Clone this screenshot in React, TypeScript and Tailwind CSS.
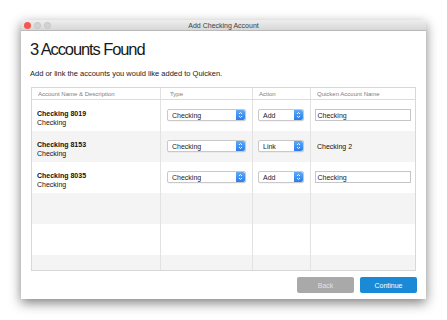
import React from "react";

const font = { fontFamily: '"Liberation Sans", Arial, sans-serif' };

function Stepper() {
  return (
    <div className="w-[9px] h-full bg-gradient-to-b from-[#5eaaf9] to-[#2a7ce9] rounded-r-[2px] flex items-center justify-center">
      <svg width="5" height="8" viewBox="0 0 5 8" fill="none">
        <path d="M1 3 L2.5 1.5 L4 3" stroke="white" strokeWidth="0.9" />
        <path d="M1 5 L2.5 6.5 L4 5" stroke="white" strokeWidth="0.9" />
      </svg>
    </div>
  );
}

function Select({ value, width }: { value: string; width: string }) {
  return (
    <div className={`${width} h-[12px] border border-[#c9c9c9] rounded-[2px] bg-white flex items-stretch shadow-[0_0.5px_0.5px_rgba(0,0,0,0.08)]`}>
      <div className="flex-1 pl-[4px] flex items-center text-[7px] text-[#222] leading-none">{value}</div>
      <Stepper />
    </div>
  );
}

function TextInput({ value }: { value: string }) {
  return (
    <div className="w-[96px] h-[12px] border border-[#c6c6c6] bg-white flex items-center pl-[1.5px] text-[7px] text-[#222] leading-none">
      {value}
    </div>
  );
}

type Row = { name: string; desc: string; action: string; link?: string };

const rows: Row[] = [
  { name: "Checking 8019", desc: "Checking", action: "Add" },
  { name: "Checking 8153", desc: "Checking", action: "Link", link: "Checking 2" },
  { name: "Checking 8035", desc: "Checking", action: "Add" },
];

export default function App() {
  return (
    <div className="w-[447px] h-[320px] bg-white pt-[20px] pl-[21px]" style={font}>
      <div className="w-[405px] h-[279px] bg-white flex flex-col shadow-[0_4px_12px_rgba(0,0,0,0.5)] rounded-t-[3px]">
        {/* Title bar */}
        <div className="h-[11px] relative flex items-center pl-[3px] bg-gradient-to-b from-[#eeeeee] to-[#d7d7d7] border-b border-[#b9b9b9] rounded-t-[3px]">
          <div className="flex gap-[3px]">
            <div className="w-[7px] h-[7px] rounded-full bg-[#f4574f]" />
            <div className="w-[7px] h-[7px] rounded-full bg-[#d3d3d3] border border-[#c4c4c4]" />
            <div className="w-[7px] h-[7px] rounded-full bg-[#d3d3d3] border border-[#c4c4c4]" />
          </div>
          <div className="absolute inset-0 flex items-center justify-center text-[7px] text-[#404040] leading-none">
            Add Checking Account
          </div>
        </div>

        <div className="px-[10px] flex flex-col flex-1">
          <div className="mt-[10px] -ml-[1px] text-[16.5px] leading-[17px] tracking-[-1.1px] text-[#1a1a1a]">3 Accounts Found</div>
          <div className="mt-[11px] -ml-[1px] text-[7.5px] leading-[9px] text-[#1a1a1a]">
            Add or link the accounts you would like added to Quicken.
          </div>

          {/* Table */}
          <div className="mt-[9px] h-[184px] border border-[#d8d8d8] flex flex-col">
            <div className="h-[12px] border-b border-[#dcdcdc] grid grid-cols-[128px_92px_58px_1fr] text-[6px] text-[#7d7d7d] leading-none">
              <div className="pl-[6px] flex items-center">Account Name &amp; Description</div>
              <div className="pl-[9px] flex items-center border-l border-[#e2e2e2]">Type</div>
              <div className="pl-[6px] flex items-center border-l border-[#e2e2e2]">Action</div>
              <div className="pl-[6px] flex items-center border-l border-[#e2e2e2]">Quicken Account Name</div>
            </div>
            {rows.map((r, i) => (
              <div
                key={r.name}
                className={`h-[31px] grid grid-cols-[128px_92px_58px_1fr] ${i % 2 === 1 ? "bg-[#f4f4f4]" : "bg-white"}`}
              >
                <div className="pl-[5px] pt-[9px] text-[7px] leading-[9px] text-[#111]">
                  <div className="font-bold">{r.name}</div>
                  <div>{r.desc}</div>
                </div>
                <div className="pl-[6px] pt-[9px] border-l border-[#e2e2e2]">
                  <Select value="Checking" width="w-[79px]" />
                </div>
                <div className="pl-[5px] pt-[9px] border-l border-[#e2e2e2]">
                  <Select value={r.action} width="w-[46px]" />
                </div>
                <div className="pl-[4px] pt-[9px] border-l border-[#e2e2e2]">
                  {r.link ? (
                    <div className="h-[12px] flex items-center pl-[2px] text-[7px] text-[#111] leading-none">{r.link}</div>
                  ) : (
                    <TextInput value="Checking" />
                  )}
                </div>
              </div>
            ))}
            <div className="h-[31px] grid grid-cols-[128px_92px_58px_1fr] bg-[#f4f4f4]">
              <div />
              <div className="border-l border-[#e2e2e2]" />
              <div className="border-l border-[#e2e2e2]" />
              <div className="border-l border-[#e2e2e2]" />
            </div>
            <div className="h-[31px] grid grid-cols-[128px_92px_58px_1fr] bg-white">
              <div />
              <div className="border-l border-[#e2e2e2]" />
              <div className="border-l border-[#e2e2e2]" />
              <div className="border-l border-[#e2e2e2]" />
            </div>
            <div className="flex-1 grid grid-cols-[128px_92px_58px_1fr] bg-[#f4f4f4]">
              <div />
              <div className="border-l border-[#e2e2e2]" />
              <div className="border-l border-[#e2e2e2]" />
              <div className="border-l border-[#e2e2e2]" />
            </div>
          </div>

          {/* Footer */}
          <div className="pt-[6px] flex justify-end gap-[6px]">
            <button className="w-[57px] h-[16px] bg-[#a9a9a9] rounded-[2px] text-[7px] text-[#e2e2e2] leading-none flex items-center justify-center">
              Back
            </button>
            <button className="w-[57px] h-[16px] bg-[#1a8ad6] rounded-[2px] text-[7px] text-white leading-none flex items-center justify-center -mr-[1px]">
              Continue
            </button>
          </div>
        </div>
      </div>
    </div>
  );
}
